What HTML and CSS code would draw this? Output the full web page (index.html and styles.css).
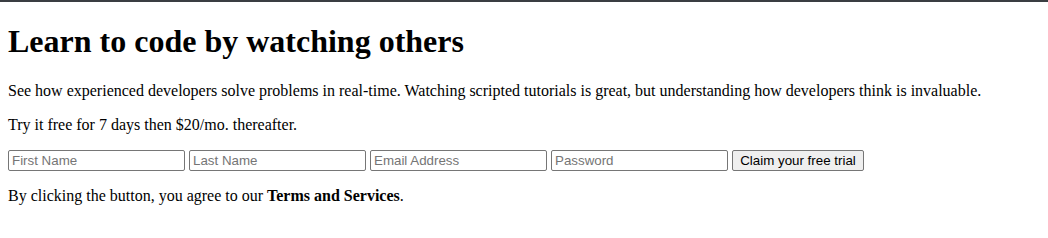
FILE: index.html
```html
<!DOCTYPE html>
<html>
<head>
<meta charset="utf-8">
<link rel="stylesheet" href="styles.css">
</head>
<body>
<div class="top-bar"></div>
<main class="content">
  <h1 class="title">Learn to code by watching others</h1>
  <p class="text">See how experienced developers solve problems in real-time. Watching scripted tutorials is great, but understanding how developers think is invaluable.</p>
  <p class="text">Try it free for 7 days then $20/mo. thereafter.</p>
  <form class="signup">
    <input class="field" type="text" placeholder="First Name"> <input class="field" type="text" placeholder="Last Name"> <input class="field" type="email" placeholder="Email Address"> <input class="field" type="password" placeholder="Password"> <button class="btn" type="button">Claim your free trial</button>
  </form>
  <p class="text">By clicking the button, you agree to our <strong>Terms and Services</strong>.</p>
</main>
</body>
</html>
```
FILE: styles.css
```css
html, body {
  margin: 0;
  padding: 0;
  background: #fff;
}
body {
  font-family: "Liberation Serif", "Times New Roman", serif;
  font-size: 16px;
  color: #000;
}
.top-bar {
  height: 2px;
  background: #3a3e42;
}
.content {
  padding: 0 8px;
}
.title {
  font-size: 32px;
  font-weight: bold;
  margin: 21.44px 0;
  line-height: normal;
}
.text {
  margin: 16px 0;
  line-height: normal;
}
.signup {
  margin: 0;
  font-size: 0;
  display: flex;
  gap: 4px;
  padding-top: 0.5px;
}
.field {
  box-sizing: border-box;
  width: 177px;
  height: 21px;
  margin: 0;
  padding: 1px 3px;
  border: 1px solid #767676;
  border-radius: 2px;
  font-family: "Liberation Sans", Arial, sans-serif;
  font-size: 13.333px;
  color: #000;
  background: #fff;
}
.field::placeholder {
  color: #757575;
}
.btn {
  box-sizing: border-box;
  width: 132px;
  height: 21px;
  margin: 0;
  padding: 1px 6px;
  border: 1px solid #767676;
  border-radius: 2px;
  background: #efefef;
  font-family: "Liberation Sans", Arial, sans-serif;
  font-size: 13.333px;
  color: #000;
}
```
